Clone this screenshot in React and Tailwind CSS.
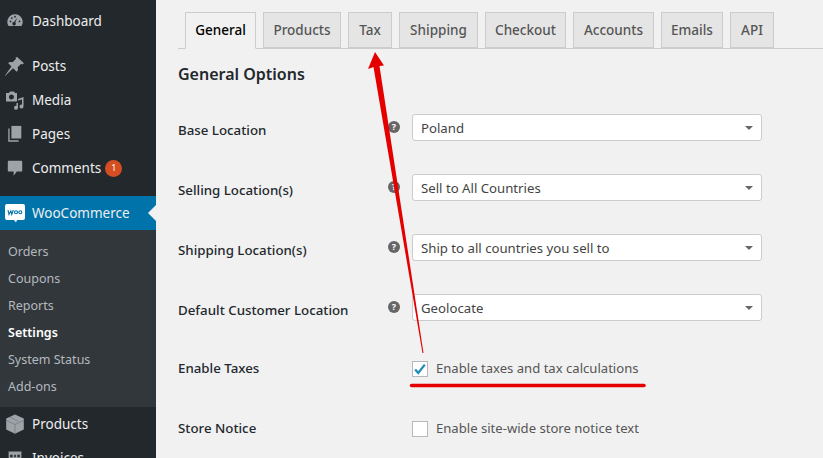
import React from "react";

const font = { fontFamily: '"Noto Sans", sans-serif' };

function DashboardIcon() {
  return (
    <svg viewBox="0 0 20 20" className="w-[18px] h-[18px]" fill="#9ea3a8">
      <path d="M10 2.5a8.5 8.5 0 0 0-7.2 13h14.4A8.5 8.5 0 0 0 10 2.5z" />
      <path d="M12.6 6.5 10.3 11.6a1.9 1.9 0 1 1-1.4-.5z" fill="#23282d" />
      <circle cx="5" cy="10.5" r="1" fill="#23282d" />
      <circle cx="6.5" cy="6.8" r="1" fill="#23282d" />
      <circle cx="10" cy="5.2" r="1" fill="#23282d" />
      <circle cx="15" cy="10.5" r="1" fill="#23282d" />
    </svg>
  );
}

function PinIcon() {
  return (
    <svg viewBox="0 0 20 20" className="w-[21px] h-[21px] shrink-0" fill="#9ea3a8">
      <path d="M12.5 1l6.500 6-1.600 1-1-.6-3.400 3.200c.6 1.800.2 3.300-.8 4.300L8.600 11.600 1 19l-.2-.2 6.300-8.900-3.200-3.200c1-1 2.600-1.400 4.300-.8l3.300-3.400-.6-1z" />
    </svg>
  );
}

function MediaIcon() {
  return (
    <svg viewBox="0 0 20 20" className="w-[20px] h-[20px] shrink-0" fill="#9ea3a8">
      <path d="M1 3h3l1-1.500h4L10 3h2v8.500H1zM6.500 4.500a2.500 2.500 0 1 0 0 5 2.500 2.500 0 0 0 0-5z" fillRule="evenodd" />
      <path d="M18.500 7v9.500a2 2 0 1 1-1.500-1.900V9.500l-4 1v7.200a2 2 0 1 1-1.500-1.900V13h1.500V9z" />
    </svg>
  );
}

function PagesIcon() {
  return (
    <svg viewBox="0 0 20 20" className="w-[18px] h-[18px]" fill="#9ea3a8">
      <path d="M6 1h11v14H6z" />
      <path d="M4 4v13h10v1.500H2.500V4z" />
    </svg>
  );
}

function CommentIcon() {
  return (
    <svg viewBox="0 0 20 20" className="w-[18px] h-[18px]" fill="#9ea3a8">
      <path d="M3 2h14a1 1 0 0 1 1 1v10a1 1 0 0 1-1 1h-5l-3.500 4.500V14H3a1 1 0 0 1-1-1V3a1 1 0 0 1 1-1z" />
    </svg>
  );
}

function WooIcon() {
  return (
    <svg viewBox="0 0 20 20" className="w-[20px] h-[20px]">
      <path d="M2 1h16a2 2 0 0 1 2 2v12a2 2 0 0 1-2 2h-6l-1 2.500L9 17H2a2 2 0 0 1-2-2V3a2 2 0 0 1 2-2z" fill="#fff" />
      <path d="M3 7l1 4.500L5.800 8l1 3.500L8.300 7" fill="none" stroke="#0073aa" strokeWidth="1.100" />
      <circle cx="11" cy="9.200" r="1.500" fill="none" stroke="#0073aa" strokeWidth="1.100" />
      <circle cx="15.300" cy="9.200" r="1.500" fill="none" stroke="#0073aa" strokeWidth="1.100" />
    </svg>
  );
}

function BoxIcon() {
  return (
    <svg viewBox="0 0 20 20" className="w-[20px] h-[20px]">
      <path d="M10 .5l8.800 4v11L10 19.800 1.200 15.500v-11z" fill="#9ea3a8" />
      <path d="M1.500 6.500 10 10.500l8.500-4M10 10.500v9M5 3l8.500 4.500" fill="none" stroke="#6f757a" strokeWidth=".7" />
    </svg>
  );
}

function InvoiceIcon() {
  return (
    <svg viewBox="0 0 20 20" className="w-[16px] h-[16px]" fill="#9ea3a8">
      <path d="M2 2h16v16H2zM4 6v3h3V6zm5 0v3h2V6zm4 0v3h3V6zm-9 5v2h3v-2zm5 0v2h2v-2zm4 0v2h3v-2z" fillRule="evenodd" />
    </svg>
  );
}

function MenuItem({ icon, label, badge }) {
  return (
    <div className="flex items-center h-[34px]">
      <div className="w-[32px] flex justify-center pl-[1px] pr-[4px] shrink-0">{icon}</div>
      <span className="text-[13.500px] text-[#eee]">{label}</span>
      {badge && (
        <span className="ml-[4px] w-[17px] h-[17px] rounded-full bg-[#d54e21] text-white text-[9px] flex items-center justify-center">
          {badge}
        </span>
      )}
    </div>
  );
}

function Sidebar() {
  const subItems = ["Orders", "Coupons", "Reports", "Settings", "System Status", "Add-ons"];
  return (
    <aside className="w-[156px] shrink-0 h-full bg-[#23282d] pt-[4px] overflow-hidden">
      <MenuItem icon={<DashboardIcon />} label="Dashboard" />
      <div className="h-[11px]" />
      <MenuItem icon={<PinIcon />} label="Posts" />
      <MenuItem icon={<MediaIcon />} label="Media" />
      <MenuItem icon={<PagesIcon />} label="Pages" />
      <MenuItem icon={<CommentIcon />} label="Comments" badge="1" />
      <div className="h-[11px]" />
      <div className="relative bg-[#0073aa]">
        <MenuItem icon={<WooIcon />} label="WooCommerce" />
        <div className="absolute right-0 top-[9px] w-0 h-0 border-y-[8px] border-y-transparent border-r-[8px] border-r-[#f1f1f1]" />
      </div>
      <div className="bg-[#32373c] pt-[9px] pb-[6px]">
        {subItems.map((item) => (
          <div
            key={item}
            className={`h-[27px] pl-[8px] flex items-center text-[12.500px] ${
              item === "Settings" ? "text-white font-semibold" : "text-[#b4b9be]"
            }`}
          >
            {item}
          </div>
        ))}
      </div>
      <MenuItem icon={<BoxIcon />} label="Products" />
      <MenuItem icon={<InvoiceIcon />} label="Invoices" />
    </aside>
  );
}

function Tabs() {
  const tabs = [
    ["General", "w-[71px]"],
    ["Products", "w-[78px]"],
    ["Tax", "w-[44px]"],
    ["Shipping", "w-[79px]"],
    ["Checkout", "w-[81px]"],
    ["Accounts", "w-[81px]"],
    ["Emails", "w-[62px]"],
    ["API", "w-[44px]"],
  ];
  return (
    <div className="flex gap-[7px] pl-[7px] border-b border-[#ccc] h-[36px] box-content">
      {tabs.map(([name, width], i) => (
        <div
          key={name}
          className={`${width} border border-[#ccc] flex items-center justify-center text-[13.500px] font-medium ${
            i === 0 ? "bg-[#f1f1f1] text-black border-b-[#f1f1f1] h-[37px] pb-[1px]" : "bg-[#e5e5e5] text-[#555] h-[36px]"
          }`}
        >
          {name}
        </div>
      ))}
    </div>
  );
}

function HelpIcon() {
  return (
    <span className="w-[12px] h-[12px] rounded-full bg-[#666] text-white text-[9px] font-bold flex items-center justify-center">
      ?
    </span>
  );
}

function SelectRow({ label, value }) {
  return (
    <div className="flex h-[60px] items-start">
      <div className="w-[210px] pt-[5px] text-[13.300px] font-medium text-[#23282d] leading-[22px]">{label}</div>
      <div className="pt-[7px]">
        <HelpIcon />
      </div>
      <div className="ml-[12px] w-[350px] h-[27px] bg-white border border-[#ccc] rounded-[3px] flex items-center justify-between px-[8px] text-[13.200px] text-[#444]">
        <span className="pt-[2px]">{value}</span>
        <span className="w-0 h-0 border-x-[4px] border-x-transparent border-t-[4px] border-t-[#666]" />
      </div>
    </div>
  );
}

function CheckRow({ label, text, checked }) {
  return (
    <div className="flex h-[60px] items-start">
      <div className="w-[234px] text-[13.300px] font-medium text-[#23282d] leading-[22px] pt-[3px]">{label}</div>
      <div className="flex items-center gap-[8px] pt-[5px]">
        <span className="w-[16px] h-[16px] border border-[#b4b9be] bg-white flex items-center justify-center">
          {checked && (
            <svg viewBox="0 0 16 16" className="w-[14px] h-[14px]">
              <path d="M2.500 8.500 6 12.500 13.500 3" fill="none" stroke="#1e8cbe" strokeWidth="2.600" />
            </svg>
          )}
        </span>
        <span className="text-[13.100px] text-[#555]">{text}</span>
      </div>
    </div>
  );
}

export default function App() {
  return (
    <div className="relative flex w-[823px] h-[458px] overflow-hidden bg-[#f1f1f1]" style={font}>
      <Sidebar />
      <main className="flex-1 pl-[22px] pt-[12px]">
        <Tabs />
        <h2 className="mt-[13px] text-[16px] font-semibold text-[#23282d] leading-[24px]">General Options</h2>
        <div className="mt-[28px]">
          <SelectRow label="Base Location" value="Poland" />
          <SelectRow label="Selling Location(s)" value="Sell to All Countries" />
          <SelectRow label="Shipping Location(s)" value="Ship to all countries you sell to" />
          <SelectRow label="Default Customer Location" value="Geolocate" />
          <CheckRow label="Enable Taxes" text="Enable taxes and tax calculations" checked />
          <CheckRow label="Store Notice" text="Enable site-wide store notice text" />
        </div>
      </main>
      {/* red annotation over the form */}
      <svg className="absolute inset-0 pointer-events-none" width="823" height="458" viewBox="0 0 823 458">
        <path d="M375 52 384 65.500 379.500 66 423.500 353 422.500 353 373.500 67 368 69z" fill="#e50000" />
        <path d="M411.500 385.500H644" stroke="#e50000" strokeWidth="3.500" strokeLinecap="round" />
      </svg>
    </div>
  );
}
